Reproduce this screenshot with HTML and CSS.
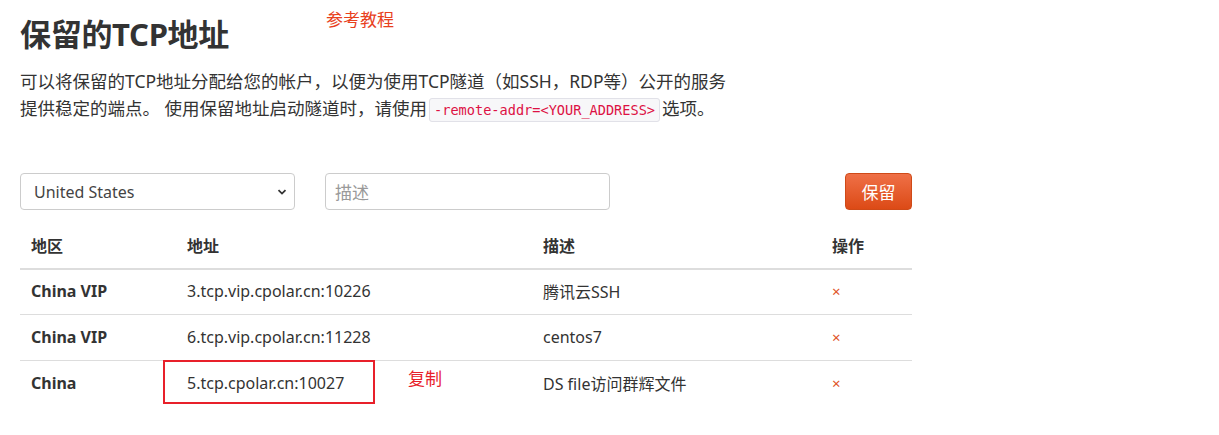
FILE: index.html
```html
<!DOCTYPE html>
<html lang="zh-CN">
<head>
<meta charset="utf-8">
<title>保留的TCP地址</title>
<link rel="stylesheet" href="styles.css">
</head>
<body>
<div class="page">
  <div class="head">
    <h1 class="title">保留的TCP地址</h1>
    <span class="note note-ref">参考教程</span>
  </div>
  <p class="intro">可以将保留的TCP地址分配给您的帐户，以便为使用TCP隧道（如SSH，RDP等）公开的服务<br>提供稳定的端点。 使用保留地址启动隧道时，请使用<code class="code">-remote-addr=&lt;YOUR_ADDRESS&gt;</code>选项。</p>

  <form class="form">
    <div class="select">
      <span>United States</span>
      <svg class="chev" width="10" height="8" viewBox="0 0 10 8"><path d="M1.5 2.2 L5 5.6 L8.5 2.2" fill="none" stroke="#333" stroke-width="1.8"/></svg>
    </div>
    <div class="input">描述</div>
    <span class="spacer"></span>
    <button type="button" class="btn">保留</button>
  </form>

  <div class="table-wrap">
    <table class="table">
      <thead>
        <tr><th class="c1">地区</th><th class="c2">地址</th><th class="c3">描述</th><th class="c4">操作</th></tr>
      </thead>
      <tbody>
        <tr><td class="region">China VIP</td><td>3.tcp.vip.cpolar.cn:10226</td><td>腾讯云SSH</td><td class="x">×</td></tr>
        <tr><td class="region">China VIP</td><td>6.tcp.vip.cpolar.cn:11228</td><td>centos7</td><td class="x">×</td></tr>
        <tr><td class="region">China</td><td>5.tcp.cpolar.cn:10027</td><td>DS file访问群辉文件</td><td class="x">×</td></tr>
      </tbody>
    </table>
    <div class="mark"></div>
    <span class="note note-copy">复制</span>
  </div>
</div>
</body>
</html>
```
FILE: styles.css
```css
html, body {
  margin: 0;
  padding: 0;
  background: #fff;
}
body {
  font-family: "Noto Sans", "Noto Sans CJK SC", sans-serif;
  color: #333;
  font-size: 16px;
}
.page {
  padding: 0 0 0 20px;
  width: 892px;
}
.head {
  position: relative;
  height: 68px;
}
.title {
  margin: 0;
  padding-top: 14px;
  font-size: 31px;
  line-height: 40px;
  font-weight: 700;
  color: #333;
  letter-spacing: -0.3px;
}
.note {
  position: absolute;
  color: #e8401c;
  font-size: 17px;
  line-height: 20px;
  font-family: "Noto Sans CJK SC", sans-serif;
}
.note-ref {
  left: 306px;
  top: 9px;
}
.intro {
  margin: 0;
  font-size: 17.5px;
  line-height: 27px;
  color: #333;
}
.code {
  font-family: "DejaVu Sans Mono", "Liberation Mono", monospace;
  font-size: 13.6px;
  color: #dd1144;
  background: #f7f7f9;
  border: 1px solid #e1e1e8;
  border-radius: 3px;
  padding: 3px 4px;
  margin: 0 2px;
}
.form {
  display: flex;
  align-items: center;
  margin-top: 49px;
  height: 37px;
}
.select {
  box-sizing: border-box;
  width: 275px;
  height: 37px;
  border: 1px solid #ccc;
  border-radius: 4px;
  display: flex;
  align-items: center;
  justify-content: space-between;
  padding: 0 7px 0 13px;
  font-size: 16px;
  color: #444;
}
.chev {
  display: block;
}
.input {
  box-sizing: border-box;
  width: 285px;
  height: 37px;
  margin-left: 30px;
  border: 1px solid #ccc;
  border-radius: 4px;
  display: flex;
  align-items: center;
  padding: 0 9px;
  color: #999;
  font-size: 17px;
}
.spacer {
  flex: 1;
}
.btn {
  width: 67px;
  height: 37px;
  border: 1px solid #cf4a18;
  border-radius: 4px;
  background: linear-gradient(#ef7047, #dc4a16);
  color: #fff;
  font-family: "Noto Sans CJK SC", sans-serif;
  font-size: 17px;
  padding: 0;
  cursor: pointer;
}
.table-wrap {
  position: relative;
  margin-top: 14px;
}
.table {
  width: 892px;
  border-collapse: collapse;
  font-size: 16px;
}
.table th, .table td {
  text-align: left;
  padding: 0 11px 2px;
  height: 43px;
  vertical-align: middle;
}
.table th {
  font-weight: 700;
  height: 42px;
  border-bottom: 2px solid #ddd;
}
.table tbody tr:first-child td {
  height: 42px;
}
.table tbody tr + tr td {
  border-top: 1px solid #ddd;
}
.c1 { width: 134px; }
.c2 { width: 334px; }
.c3 { width: 267px; }
.region {
  font-weight: 700;
}
.x {
  color: #e0521f;
  font-size: 15px;
}
.mark {
  position: absolute;
  left: 143px;
  top: 136px;
  width: 208px;
  height: 40px;
  border: 2px solid #e8202a;
}
.note-copy {
  left: 388px;
  top: 144px;
  color: #e8202a;
}
```
